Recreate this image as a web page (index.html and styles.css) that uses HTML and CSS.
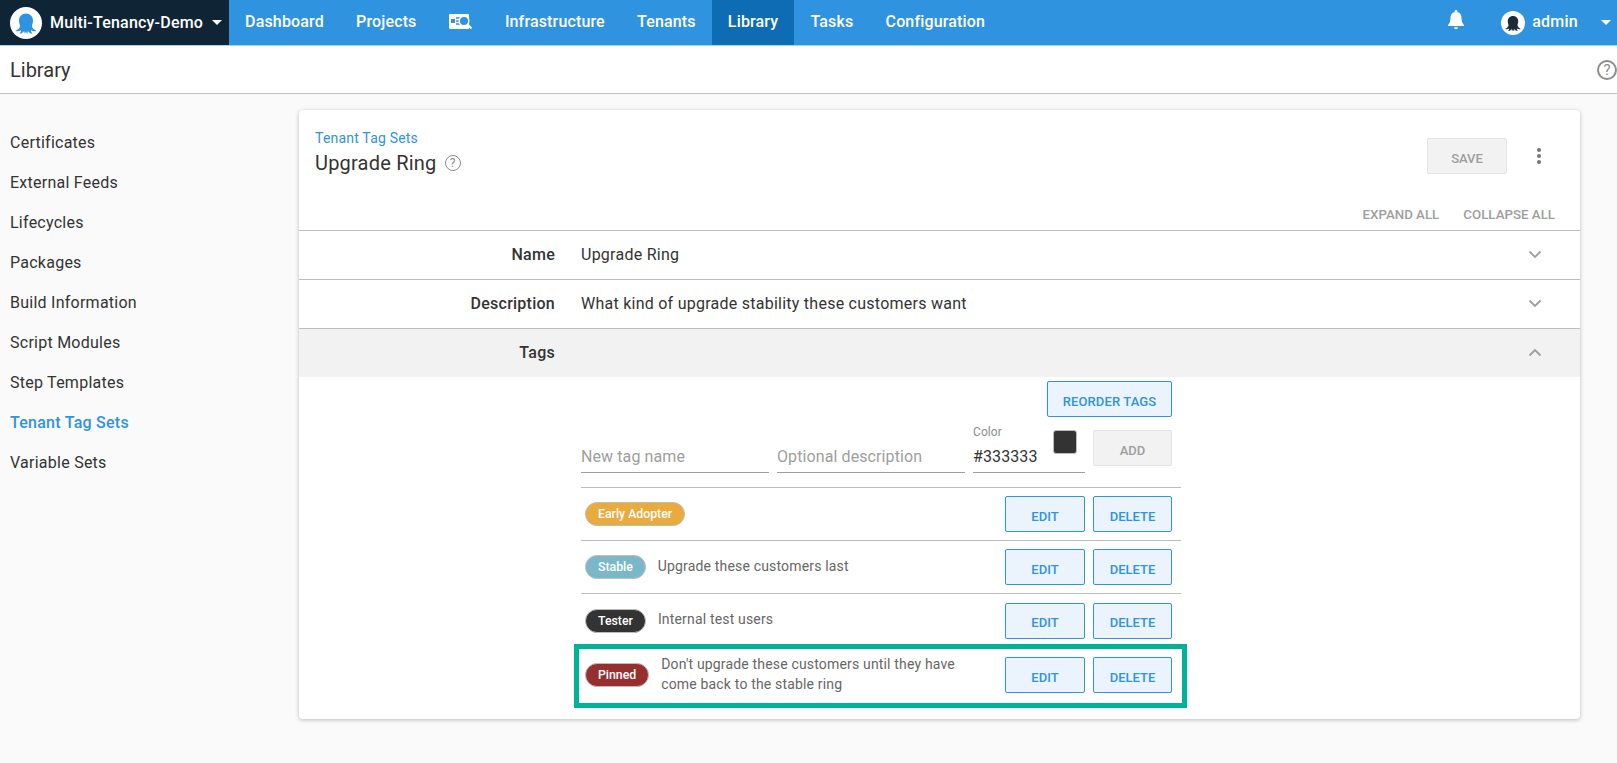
FILE: index.html
```html
<!DOCTYPE html>
<html lang="en">
<head>
    <meta charset="UTF-8">
    <meta name="viewport" content="width=device-width, initial-scale=1.0">
    <title>Library - Upgrade Ring</title>
    <link rel="stylesheet" href="styles.css">
</head>
<body>
    <header class="topbar">
        <div class="brand">
            <svg class="brand-logo" viewBox="0 0 32 32">
                <circle cx="16" cy="16" r="16" fill="#fff"/>
                <path d="M16 6.500c-4 0-7 3-7 7 0 2.500 1 4 1 5.500 0 2-2 3.500-4.500 5 2 .6 4 .2 5.500-.8 0 1.300-.5 2.300-1.500 3.300 2 .3 3.600-.7 4.600-2.500.4.900.5 1.600.4 2.600 1-.4 1.200-1.100 1.500-2.300.3 1.200.5 1.900 1.500 2.300-.1-1 0-1.700.4-2.600 1 1.800 2.600 2.800 4.600 2.500-1-1-1.500-2-1.500-3.300 1.500 1 3.500 1.400 5.500.8-2.500-1.500-4.500-3-4.500-5 0-1.500 1-3 1-5.500 0-4-3-7-7-7z" fill="#2f93e0"/>
            </svg>
            <span class="brand-name">Multi-Tenancy-Demo</span>
            <span class="caret"></span>
        </div>
        <nav class="mainnav">
            <a class="nav-link" href="#">Dashboard</a>
            <a class="nav-link" href="#">Projects</a>
            <a class="nav-link nav-icon" href="#">
                <svg width="24" height="17" viewBox="0 0 24 17">
                    <rect x="0" y="1" width="20" height="15" rx="1" fill="#fff"/>
                    <rect x="2" y="6" width="4" height="4" fill="#2f93e0"/>
                    <path d="M7 5h4M7 8h3M7 11h4" stroke="#2f93e0" stroke-width="1.300"/>
                    <circle cx="15" cy="8" r="4.800" fill="#2f93e0" stroke="#fff" stroke-width="1.500"/>
                    <path d="M18.500 11.500l4 4" stroke="#fff" stroke-width="2"/>
                </svg>
            </a>
            <a class="nav-link" href="#">Infrastructure</a>
            <a class="nav-link" href="#">Tenants</a>
            <a class="nav-link active" href="#">Library</a>
            <a class="nav-link" href="#">Tasks</a>
            <a class="nav-link" href="#">Configuration</a>
        </nav>
        <div class="usermenu">
            <svg class="bell" width="16" height="20" viewBox="0 0 16 20">
                <path d="M8 0c-.8 0-1.400.6-1.400 1.400v.7C3.900 2.800 2.500 5 2.500 7.800c0 3.800-1 5.700-2.500 7.200v1h16v-1c-1.500-1.500-2.500-3.400-2.500-7.200 0-2.800-1.400-5-4.100-5.700v-.7C9.400.6 8.800 0 8 0zM6 17.200h4c0 1.200-.9 2-2 2s-2-.8-2-2z" fill="#fff"/>
            </svg>
            <svg class="avatar" viewBox="0 0 32 32">
                <circle cx="16" cy="16" r="16" fill="#fff"/>
                <path d="M16 6.500c-4 0-7 3-7 7 0 2.500 1 4 1 5.500 0 2-2 3.500-4.500 5 2 .6 4 .2 5.500-.8 0 1.300-.5 2.300-1.500 3.300 2 .3 3.600-.7 4.600-2.500.4.900.5 1.600.4 2.600 1-.4 1.200-1.100 1.500-2.300.3 1.200.5 1.900 1.500 2.300-.1-1 0-1.700.4-2.600 1 1.800 2.600 2.800 4.600 2.500-1-1-1.500-2-1.500-3.300 1.500 1 3.500 1.400 5.500.8-2.500-1.500-4.500-3-4.500-5 0-1.500 1-3 1-5.500 0-4-3-7-7-7z" fill="#1a2b3c"/>
            </svg>
            <span class="username">admin</span>
            <span class="caret user-caret"></span>
        </div>
    </header>

    <div class="pagetitle">
        <span>Library</span>
        <span class="help help-large">?</span>
    </div>

    <div class="layout">
        <aside class="sidebar">
            <a href="#">Certificates</a>
            <a href="#">External Feeds</a>
            <a href="#">Lifecycles</a>
            <a href="#">Packages</a>
            <a href="#">Build Information</a>
            <a href="#">Script Modules</a>
            <a href="#">Step Templates</a>
            <a class="current" href="#">Tenant Tag Sets</a>
            <a href="#">Variable Sets</a>
        </aside>

        <main class="card">
            <div class="card-head">
                <div class="card-title">
                    <a class="crumb" href="#">Tenant Tag Sets</a>
                    <h1>Upgrade Ring <span class="help help-title">?</span></h1>
                </div>
                <div class="card-actions">
                    <button class="btn btn-disabled btn-save">SAVE</button>
                    <svg class="kebab" width="4" height="16" viewBox="0 0 4 16">
                        <circle cx="2" cy="2" r="2" fill="#757575"/>
                        <circle cx="2" cy="8" r="2" fill="#757575"/>
                        <circle cx="2" cy="14" r="2" fill="#757575"/>
                    </svg>
                </div>
                <div class="expand-links">
                    <span>EXPAND ALL</span>
                    <span>COLLAPSE ALL</span>
                </div>
            </div>

            <div class="section">
                <div class="section-label">Name</div>
                <div class="section-value">Upgrade Ring</div>
                <svg class="chevron" width="14" height="9" viewBox="0 0 14 9"><path d="M1.500 1.500L7 7l5.500-5.500" fill="none" stroke="#9e9e9e" stroke-width="1.800"/></svg>
            </div>
            <div class="section">
                <div class="section-label">Description</div>
                <div class="section-value">What kind of upgrade stability these customers want</div>
                <svg class="chevron" width="14" height="9" viewBox="0 0 14 9"><path d="M1.500 1.500L7 7l5.500-5.500" fill="none" stroke="#9e9e9e" stroke-width="1.800"/></svg>
            </div>
            <div class="section section-open">
                <div class="section-label">Tags</div>
                <div class="section-value"></div>
                <svg class="chevron" width="14" height="9" viewBox="0 0 14 9"><path d="M1.500 7.500L7 2l5.500 5.500" fill="none" stroke="#9e9e9e" stroke-width="1.800"/></svg>
            </div>

            <div class="tags">
                <div class="reorder-row">
                    <button class="btn btn-outline btn-reorder">REORDER TAGS</button>
                </div>
                <div class="add-row">
                    <div class="field field-name">New tag name</div>
                    <div class="field field-desc">Optional description</div>
                    <div class="field field-color">
                        <span class="color-label">Color</span>
                        <span class="color-value">#333333</span>
                        <span class="swatch"></span>
                    </div>
                    <button class="btn btn-disabled btn-add">ADD</button>
                </div>

                <div class="tag-row tag-row-first">
                    <span class="chip chip-early">Early Adopter</span>
                    <span class="tag-desc"></span>
                    <button class="btn btn-outline btn-edit">EDIT</button>
                    <button class="btn btn-outline">DELETE</button>
                </div>
                <div class="tag-row">
                    <span class="chip chip-stable">Stable</span>
                    <span class="tag-desc">Upgrade these customers last</span>
                    <button class="btn btn-outline btn-edit">EDIT</button>
                    <button class="btn btn-outline">DELETE</button>
                </div>
                <div class="tag-row">
                    <span class="chip chip-tester">Tester</span>
                    <span class="tag-desc">Internal test users</span>
                    <button class="btn btn-outline btn-edit">EDIT</button>
                    <button class="btn btn-outline">DELETE</button>
                </div>
                <div class="tag-row tag-row-marked">
                    <span class="chip chip-pinned">Pinned</span>
                    <span class="tag-desc">Don't upgrade these customers until they have come back to the stable ring</span>
                    <button class="btn btn-outline btn-edit">EDIT</button>
                    <button class="btn btn-outline">DELETE</button>
                </div>
            </div>
        </main>
    </div>
</body>
</html>
```

FILE: styles.css
```css
* {
    box-sizing: border-box;
}
html, body {
    height: 100%;
}
body {
    margin: 0;
    font-family: Roboto, "Liberation Sans", sans-serif;
    color: #333;
    background-color: #fafafa;
    overflow: hidden;
}
a {
    text-decoration: none;
    color: inherit;
}

/* top bar */
.topbar {
    display: flex;
    align-items: center;
    height: 45px;
    background-color: #2f93e0;
    color: #fff;
}
.brand {
    display: flex;
    align-items: center;
    width: 229px;
    height: 100%;
    padding-left: 10px;
    background-color: #0f2535;
}
.brand-logo {
    width: 32px;
    height: 32px;
    margin-right: 8px;
}
.brand-name {
    font-size: 16px;
    font-weight: 500;
    letter-spacing: .2px;
}
.caret {
    width: 0;
    height: 0;
    margin-left: 9px;
    border-left: 5px solid transparent;
    border-right: 5px solid transparent;
    border-top: 5px solid #fff;
}
.mainnav {
    display: flex;
    height: 100%;
}
.nav-link {
    display: flex;
    align-items: center;
    padding: 0 16.1px 2px;
    font-size: 16px;
    font-weight: 500;
    letter-spacing: .15px;
}
.nav-link.active {
    background-color: #0d6cb3;
}
.usermenu {
    display: flex;
    align-items: center;
    margin-left: auto;
    padding-right: 6px;
}
.bell {
    margin-right: 37px;
    margin-top: -6px;
}
.avatar {
    width: 24px;
    height: 24px;
    margin-right: 7px;
}
.username {
    font-size: 16px;
    font-weight: 500;
    letter-spacing: .25px;
    margin-bottom: 2px;
}
.user-caret {
    margin-left: 23px;
}

/* page title */
.pagetitle {
    display: flex;
    align-items: center;
    justify-content: space-between;
    height: 49px;
    padding-left: 10px;
    font-size: 20px;
    background-color: #fff;
    border-top: 1px solid #a9d2f2;
    border-bottom: 1px solid #bdbdbd;
}
.help {
    display: inline-flex;
    align-items: center;
    justify-content: center;
    width: 16px;
    height: 16px;
    margin-left: 5px;
    font-size: 12px;
    letter-spacing: 0;
    color: #8c8c8c;
    border: 1.5px solid #8c8c8c;
    border-radius: 50%;
    vertical-align: 3px;
}
.help-title {
    margin-left: 3px;
}
.help-large {
    width: 20px;
    height: 20px;
    font-size: 15px;
    border-width: 2px;
}

.layout {
    display: flex;
    align-items: flex-start;
    padding-top: 16px;
}

/* left menu */
.sidebar {
    width: 299px;
    flex-shrink: 0;
    padding: 13px 0 0 10px;
}
.sidebar a {
    display: block;
    height: 40px;
    line-height: 40px;
    font-size: 16px;
    letter-spacing: .25px;
}
.sidebar a.current {
    color: #2f93e0;
    font-weight: 500;
}

/* card */
.card {
    width: 1281px;
    height: 609px;
    background-color: #fff;
    border-radius: 4px;
    box-shadow: 0 1px 4px rgba(0, 0, 0, .25);
}
.card-head {
    position: relative;
    height: 120px;
    padding: 20px 16px;
}
.crumb {
    display: block;
    font-size: 14px;
    line-height: 17px;
    color: #2f93e0;
    letter-spacing: .2px;
}
.card-title h1 {
    margin: 3px 0 0;
    font-size: 20px;
    line-height: 26px;
    font-weight: 400;
    letter-spacing: .2px;
}
.card-actions {
    position: absolute;
    top: 28px;
    right: 39px;
    display: flex;
    align-items: flex-start;
}
.kebab {
    margin: 10px 0 0 30px;
}
.expand-links {
    position: absolute;
    top: 97px;
    right: 25px;
    display: flex;
    gap: 24px;
    font-size: 13.3px;
    line-height: 15px;
    font-weight: 500;
    color: #9e9e9e;
}

/* expandable rows */
.section {
    display: flex;
    align-items: center;
    height: 49px;
    padding-bottom: 2px;
    border-top: 1px solid #bdbdbd;
    font-size: 16px;
    letter-spacing: .25px;
}
.section-label {
    width: 256px;
    text-align: right;
    font-weight: 500;
}
.section-value {
    flex: 1;
    margin-left: 26px;
}
.chevron {
    margin-right: 38px;
}
.section-open {
    background-color: #f2f2f2;
}

/* tag editor */
.tags {
    width: 600px;
    margin-left: 282px;
    padding-top: 4px;
}
.reorder-row {
    display: flex;
    justify-content: flex-end;
    padding-right: 9px;
}
.btn {
    height: 36px;
    padding: 4px 0 0;
    font-family: inherit;
    font-size: 13px;
    font-weight: 500;
    border-radius: 2px;
}
.btn-outline {
    width: 79px;
    color: #2f93e0;
    background-color: #ebf4fc;
    border: 1px solid #2f93e0;
}
.btn-edit {
    width: 80px;
}
.btn-reorder {
    width: 125px;
    letter-spacing: .1px;
}
.btn-disabled {
    width: 79px;
    color: #9e9e9e;
    background-color: #f2f2f2;
    border: 1px solid #e4e4e4;
}
.btn-save {
    width: 80px;
}
.add-row {
    position: relative;
    display: flex;
    height: 71px;
    padding-top: 12px;
    border-bottom: 1px solid #bdbdbd;
}
.field {
    position: relative;
    height: 44px;
    padding-top: 16px;
    font-size: 16px;
    line-height: 24px;
    letter-spacing: .1px;
    color: #9e9e9e;
    border-bottom: 1px solid #9e9e9e;
}
.field-name, .field-desc {
    width: 188px;
    margin-right: 8px;
}
.field-color {
    width: 112px;
    color: #333;
}
.color-label {
    position: absolute;
    left: 0;
    top: -4px;
    font-size: 12px;
    line-height: 14px;
    color: #8c8c8c;
}
.swatch {
    position: absolute;
    left: 80px;
    top: 1px;
    width: 24px;
    height: 24px;
    background-color: #333;
    border: 1px solid #bdbdbd;
    border-radius: 3px;
}
.btn-add {
    position: absolute;
    left: 512px;
    top: 13px;
}
.tag-row {
    display: flex;
    align-items: center;
    height: 53.6px;
    padding: 1px 9px 0 4px;
    border-bottom: 1px solid #bdbdbd;
}
.tag-row-first {
    height: 52.6px;
}
.tag-row .btn + .btn {
    margin-left: 8px;
}
.tag-row-marked {
    position: relative;
    border-bottom: none;
}
.tag-row-marked::after {
    content: "";
    position: absolute;
    left: -7px;
    right: -6px;
    top: -4px;
    bottom: -7px;
    border: 5px solid #00b398;
    pointer-events: none;
}
.chip {
    display: inline-block;
    flex-shrink: 0;
    height: 24px;
    padding: 0 12px;
    font-size: 12.3px;
    line-height: 23px;
    font-weight: 500;
    color: #fff;
    border: 1px solid #bdbdbd;
    border-radius: 12px;
}
.chip-early {
    background-color: #e9ac3c;
}
.chip-stable {
    background-color: #7ab8c9;
}
.chip-tester {
    background-color: #333;
}
.chip-pinned {
    background-color: #982f2f;
}
.tag-desc {
    flex: 1;
    margin: 0 0 3px 12px;
    padding-right: 40px;
    font-size: 14px;
    line-height: 20px;
    letter-spacing: .17px;
    color: #666;
}
```
